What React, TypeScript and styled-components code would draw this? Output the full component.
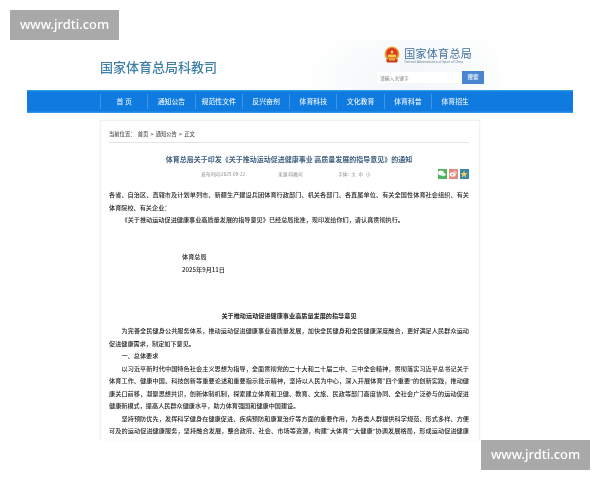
import React from "react";
import styled, { createGlobalStyle } from "styled-components";

const Global = createGlobalStyle`
  html, body { margin: 0; padding: 0; background: #fff; }
  body { font-family: "Noto Sans CJK SC", "Liberation Sans", sans-serif; }
`;

const Page = styled.div`
  position: relative;
  width: 600px;
  height: 480px;
  overflow: hidden;
  background: #fff;
  padding-top: 40px;
  box-sizing: border-box;
`;

const Watermark = styled.div<{ $corner: "tl" | "br" }>`
  position: absolute;
  ${(p) => (p.$corner === "tl" ? "left: 10px; top: 10px;" : "left: 481px; top: 440px;")}
  width: 109px;
  height: 30px;
  background: #a9a9a9;
  color: #fff;
  font-family: "Noto Sans", sans-serif;
  font-size: 12.9px;
  font-weight: 500;
  line-height: 29px;
  text-align: center;
  filter: blur(0.3px);
`;

const Header = styled.header`
  height: 50px;
  margin-left: 100px;
  width: 400px;
  display: flex;
  background: radial-gradient(ellipse 110px 60px at 310px 40px, #f3f6f9 0, #f8fafb 55%, #fff 100%);
`;

const SiteTitle = styled.div`
  width: 270px;
  padding-top: 17px;
  font-size: 13px;
  font-weight: 500;
  line-height: 20px;
  color: #3f7fa8;
  filter: blur(0.3px);
`;

const HeaderRight = styled.div`
  display: flex;
  flex-direction: column;
  align-items: flex-end;
  width: 114px;
`;

const Brand = styled.div`
  display: flex;
  align-items: center;
  gap: 4px;
  margin-top: 3px;
  height: 24px;
  padding-right: 12px;
`;

const BrandText = styled.div`
  display: flex;
  flex-direction: column;
  filter: blur(0.2px);
`;

const BrandName = styled.div`
  font-size: 11px;
  line-height: 14px;
  letter-spacing: 0.3px;
  color: #43709f;
`;

const BrandEn = styled.div`
  font-family: "Liberation Sans", sans-serif;
  font-size: 3.3px;
  line-height: 5px;
  color: #6f86a0;
  white-space: nowrap;
`;

const Search = styled.div`
  display: flex;
  align-items: center;
  gap: 1px;
  margin-top: 4px;
`;

const SearchInput = styled.div`
  width: 81px;
  height: 11px;
  background: #fff;
  padding-left: 3px;
  font-size: 4.8px;
  line-height: 11px;
  color: #777;
  filter: blur(0.2px);
`;

const SearchButton = styled.div`
  width: 22px;
  height: 13px;
  background: #4a86d0;
  color: #e8f0fa;
  font-size: 5.4px;
  font-weight: 700;
  line-height: 13px;
  text-align: center;
`;

const Nav = styled.nav`
  margin-left: 27px;
  width: 546px;
  height: 23px;
  padding-left: 73px;
  box-sizing: border-box;
  display: flex;
  background: linear-gradient(180deg, #3aa4ec 0, #0f7be0 2px, #0f7be0 21px, #3f9fea 23px);
`;

const NavItem = styled.div`
  width: 47.3px;
  margin: 4px 0;
  height: 15px;
  line-height: 15px;
  text-align: center;
  border-left: 1px solid #3d95e6;
  box-sizing: border-box;
  color: #e6f1fc;
  font-size: 6.9px;
  font-weight: 500;
  filter: blur(0.2px);
`;

const Card = styled.main`
  margin: 7px 0 0 100px;
  width: 380px;
  height: 320px;
  box-sizing: border-box;
  padding: 8px 10px 0 8px;
  border: 1px solid #f0f0f0;
  border-bottom: 0;
  overflow: hidden;
  box-shadow: 0 0 3px #f4f4f4;
`;

const Crumb = styled.div`
  height: 10px;
  line-height: 10px;
  font-size: 5.3px;
  font-weight: 500;
  color: #555;
  word-spacing: 1px;
  border-bottom: 1.5px solid #dde6e8;
  padding-bottom: 3px;
  filter: blur(0.2px);
`;

const Title = styled.h1`
  margin: 10px 0 0;
  font-size: 7px;
  font-weight: 700;
  line-height: 12px;
  text-align: center;
  color: #3f5f7f;
  filter: blur(0.2px);
`;

const MetaRow = styled.div`
  position: relative;
  height: 13px;
  margin-top: 3px;
  display: flex;
  padding-left: 92px;
  font-size: 4.7px;
  line-height: 13px;
  color: #8a8a8a;
  word-spacing: 1.5px;
  filter: blur(0.2px);
`;

const MetaItem = styled.span<{ $w: number }>`
  width: ${(p) => p.$w}px;
`;

const Shares = styled.div`
  position: absolute;
  right: 0;
  top: 1px;
  display: flex;
  gap: 1.5px;
`;

const ShareIcon = styled.div<{ $bg: string }>`
  width: 9.5px;
  height: 9.5px;
  background: ${(p) => p.$bg};
  display: flex;
  align-items: center;
  justify-content: center;
`;

const Body = styled.div`
  margin-top: 8px;
  font-family: "Liberation Serif", "Noto Sans CJK SC", serif;
  font-size: 6.15px;
  font-weight: 500;
  line-height: 12.5px;
  color: #242424;
  filter: blur(0.25px);
`;

const Para = styled.p<{ $indent?: boolean; $fill?: boolean }>`
  margin: 0;
  text-align: justify;
  text-indent: ${(p) => (p.$indent ? "12.5px" : "0")};
  ${(p) => (p.$fill ? "text-align-last: justify;" : "")}
`;

const Sign = styled.p<{ $top: number }>`
  margin: ${(p) => p.$top}px 0 0 73px;
  font-family: "Noto Sans CJK SC", sans-serif;
`;

const SubTitle = styled.h2`
  margin: 33px 0 3px;
  font-size: 6.15px;
  font-weight: 700;
  line-height: 12.5px;
  text-align: center;
`;

const Emblem = () => (
  <svg width="16" height="18" viewBox="0 0 16 18">
    <circle cx="8" cy="8" r="7.5" fill="#e9a83a" />
    <circle cx="8" cy="7.5" r="5.8" fill="#d83a22" />
    <circle cx="8" cy="6" r="1.4" fill="#f6d25a" />
    <rect x="4" y="8.5" width="8" height="2.6" fill="#f4c94e" />
    <rect x="2.5" y="12.8" width="11" height="3.8" rx="1" fill="#cc3a1f" />
    <rect x="5" y="11.5" width="6" height="3" fill="#eaa935" />
  </svg>
);

const navItems = ["首 页", "通知公告", "规范性文件", "反兴奋剂", "体育科技", "文化教育", "体育科普", "体育招生"];

/* Source text is typed with ASCII , and : and rendered with the full-width Chinese forms. */
const zh = (s: string) => s.replace(/,/g, "\uFF0C").replace(/:/g, "\uFF1A");

export default function App() {
  return (
    <Page lang="zh-CN">
      <Global />
      <Header>
        <SiteTitle>国家体育总局科教司</SiteTitle>
        <HeaderRight>
          <Brand>
            <Emblem />
            <BrandText>
              <BrandName>国家体育总局</BrandName>
              <BrandEn>General Administration of Sport of China</BrandEn>
            </BrandText>
          </Brand>
          <Search>
            <SearchInput>请输入关键字</SearchInput>
            <SearchButton>搜索</SearchButton>
          </Search>
        </HeaderRight>
      </Header>
      <Nav>
        {navItems.map((n) => (
          <NavItem key={n}>{n}</NavItem>
        ))}
      </Nav>
      <Card>
        <Crumb>{zh("当前位置: 首页 > 通知公告 > 正文")}</Crumb>
        <Title>体育总局关于印发《关于推动运动促进健康事业 高质量发展的指导意见》的通知</Title>
        <MetaRow>
          <MetaItem $w={77}>发布时间:2025-09-22</MetaItem>
          <MetaItem $w={60}>来源:科教司</MetaItem>
          <MetaItem $w={40}>字体: 大 中 小</MetaItem>
          <Shares>
            <ShareIcon $bg="#4fb45a">
              <svg width="8" height="7" viewBox="0 0 8 7"><ellipse cx="3" cy="3" rx="2.8" ry="2.4" fill="#fff" /><ellipse cx="5.5" cy="4.5" rx="2.2" ry="1.8" fill="#e8f6ea" /></svg>
            </ShareIcon>
            <ShareIcon $bg="#e58a7e">
              <svg width="8" height="7" viewBox="0 0 8 7"><ellipse cx="3.6" cy="4.4" rx="3" ry="2.2" fill="#fff" /><circle cx="3.4" cy="4.5" r="1" fill="#e58a7e" /><path d="M5 1 Q7.5 1 7.3 3.4" stroke="#fff" strokeWidth="0.8" fill="none" /></svg>
            </ShareIcon>
            <ShareIcon $bg="#3a86a8">
              <svg width="8" height="8" viewBox="0 0 8 8"><path d="M4 .5 5 3 7.6 3.2 5.6 4.9 6.2 7.5 4 6.1 1.8 7.5 2.4 4.9.4 3.2 3 3Z" fill="#e8cf6a" /></svg>
            </ShareIcon>
          </Shares>
        </MetaRow>
        <Body>
          <Para>{zh("各省、自治区、直辖市及计划单列市、新疆生产建设兵团体育行政部门、机关各部门、各直属单位、有关全国性体育社会组织、有关体育院校、有关企业:")}</Para>
          <Para $indent>{zh("《关于推动运动促进健康事业高质量发展的指导意见》已经总局批准,现印发给你们,请认真贯彻执行。")}</Para>
          <Sign $top={24}>体育总局</Sign>
          <Sign $top={1}>2025年9月11日</Sign>
          <SubTitle>关于推动运动促进健康事业高质量发展的指导意见</SubTitle>
          <Para $indent>{zh("为完善全民健身公共服务体系,推动运动促进健康事业高质量发展,加快全民健身和全民健康深度融合,更好满足人民群众运动促进健康需求,制定如下意见。")}</Para>
          <Para $indent>一、总体要求</Para>
          <Para $indent>{zh("以习近平新时代中国特色社会主义思想为指导,全面贯彻党的二十大和二十届二中、三中全会精神,贯彻落实习近平总书记关于体育工作、健康中国、科技创新等重要论述和重要指示批示精神,坚持以人民为中心,深入开展体育\u201C四个重要\u201D的创新实践,推动健康关口前移,凝聚思想共识,创新体制机制,探索建立体育和卫健、教育、文旅、民政等部门高度协同、全社会广泛参与的运动促进健康新模式,提高人民群众健康水平,助力体育强国和健康中国建设。")}</Para>
          <Para $indent $fill>{zh("坚持预防优先,发挥科学健身在健康促进、疾病预防和康复治疗等方面的重要作用,为各类人群提供科学规范、形式多样、方便可及的运动促进健康服务,坚持融合发展,整合政府、社会、市场等资源,构建\u201C大体育\u201D\u201C大健康\u201D协调发展格局,形成运动促进健康")}</Para>
        </Body>
      </Card>
      <Watermark $corner="tl">www.jrdti.com</Watermark>
      <Watermark $corner="br">www.jrdti.com</Watermark>
    </Page>
  );
}
